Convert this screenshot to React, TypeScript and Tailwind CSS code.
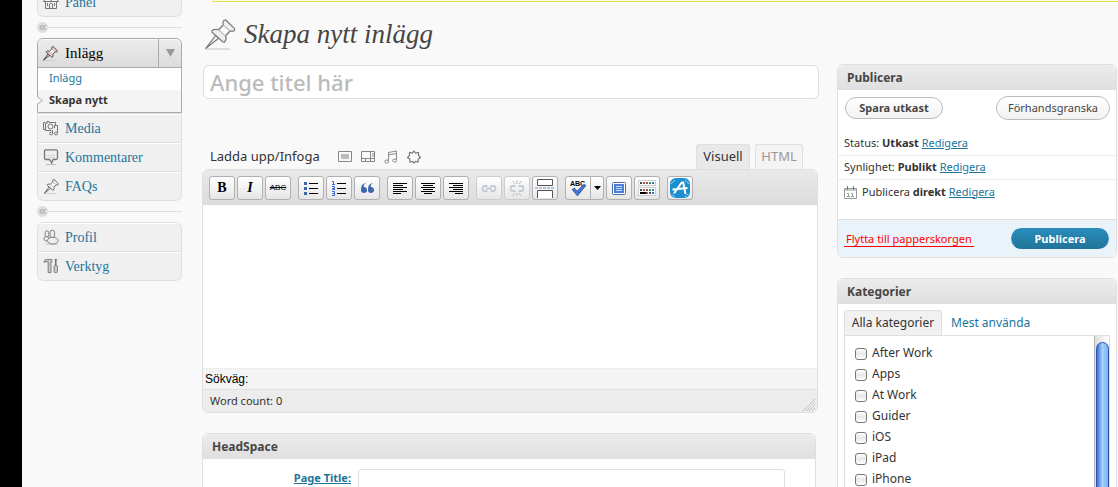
import type { ReactNode } from 'react'
import clsx from 'clsx'

type IconProps = { className?: string }

function PinIcon({ className, fill = '#efefef', stroke = '#777', width = 1.2 }: IconProps & { fill?: string; stroke?: string; width?: number }) {
  return (
    <svg viewBox="0 0 31 31" className={className} fill={fill} stroke={stroke} strokeWidth={width} strokeLinejoin="round" aria-hidden="true">
      <path d="M0 30H25" stroke="#ccc" />
      <path d="M11 16L.8 29.4 14 19z" />
      <path d="M20.500.8L29.600 9.600Q30 12 28 12.200L25 12 20.500 17Q22 20 19.500 23.200L18 23 7 13.300V11.600Q10 9.600 13.500 10.700L18.300 6Q17.500 3 18.500 1.800z" />
      <path d="M15 13L21 7M18 15L23 10" fill="none" stroke="#fff" strokeWidth="2.500" />
      <path d="M18.300 6L25 12M13.500 10.700L20.500 17" fill="none" stroke="#bbb" />
    </svg>
  )
}

function HomeIcon({ className }: IconProps) {
  return (
    <svg viewBox="0 0 16 16" className={className} fill="none" stroke="#777" aria-hidden="true">
      <path d="M2.500 8V14.500H13.500V8M.5 7.500L3 4H13L15.500 7.500zM6.500 14.500V10Q8 8 9.500 10V14.500M4.500 9V12M11.500 9V12M3.500 4V2.500H6V4M8 7.500V1" />
    </svg>
  )
}

function MediaIcon({ className }: IconProps) {
  return (
    <svg viewBox="0 0 16 16" className={className} fill="none" stroke="#777" aria-hidden="true">
      <path d="M8 10.500H2.500V3.500H4V1.500H6V2.500H12.500V6M2.500 9.500H.5V2.500H2.500" />
      <circle cx="7.500" cy="6.500" r="2.500" />
      <path d="M9.500 13V10M14.500 13V5.500H11.500V8" />
      <ellipse cx="8.200" cy="13.500" rx="1.600" ry="1.400" />
      <ellipse cx="13" cy="13.500" rx="1.600" ry="1.400" />
    </svg>
  )
}

function CommentIcon({ className }: IconProps) {
  return (
    <svg viewBox="0 0 16 16" className={className} fill="#eee" stroke="#777" aria-hidden="true">
      <path d="M3 15.500H13" stroke="#bbb" />
      <path d="M3 .8H13Q14.500.8 14.500 2.500V8.500Q14.500 10.500 13 10.500H10L8.800 14 6.500 10.500H3Q1.500 10.500 1.500 8.500V2.500Q1.500.8 3 .8z" strokeWidth="1.300" />
      <path d="M4 6.500H12M4 8.500H12" stroke="#d4d4d4" />
    </svg>
  )
}

function UsersIcon({ className }: IconProps) {
  return (
    <svg viewBox="0 0 18 18" className={className} fill="#eee" stroke="#777" aria-hidden="true">
      <path d="M3 16.500H17" stroke="#bbb" />
      <rect x="2.500" y="1.500" width="4" height="7" rx="2" />
      <ellipse cx="4" cy="10.500" rx="3" ry="2.500" />
      <rect x="8" y=".8" width="5" height="8.500" rx="2.500" />
      <ellipse cx="11" cy="12.500" rx="6" ry="3.800" />
    </svg>
  )
}

function ToolsIcon({ className }: IconProps) {
  return (
    <svg viewBox="0 0 17 17" className={className} fill="#ccc" stroke="#777" aria-hidden="true">
      <path d="M.8 4.500Q1.500 1.500 4.500 1.500H9.500V4H8.500V15.500H5.500V4H3.500z" />
      <path d="M13.500 1V8" strokeWidth="1.800" />
      <rect x="11.800" y="8" width="3.500" height="7.500" rx="1" />
      <path d="M12.500 1.500H15" />
    </svg>
  )
}

function Separator() {
  return (
    <div className="flex h-[21px] items-center">
      <span className="flex size-[11px] items-center justify-center rounded-full bg-[#dfdfdf]">
        <svg viewBox="0 0 7 7" className="size-[7px]" fill="none" stroke="#888" aria-hidden="true">
          <path d="M3.500 1L1 3.500 3.500 6M6.500 1L4 3.500 6.500 6" />
        </svg>
      </span>
      <span className="h-px flex-1 bg-[#dfdfdf]" />
    </div>
  )
}

function MenuItem({ icon, children, last }: { icon: ReactNode; children: ReactNode; last?: boolean }) {
  return (
    <a
      href="#"
      className={clsx(
        'flex h-[29px] shrink-0 items-center gap-1.5 border-b border-[#dfdfdf] bg-[#f0f0f0] pl-[5px] font-["Liberation_Serif",serif] text-[14px] text-[#21759b] shadow-[inset_0_1px_0_#fff]',
        last && 'rounded-b-md'
      )}
    >
      <span className="flex w-4 justify-center">{icon}</span>
      {children}
    </a>
  )
}

function Sidebar() {
  return (
    <nav className="w-[145px] shrink-0">
      <div className="flex h-[17px] flex-col justify-end overflow-hidden rounded-b-md border-x border-[#dfdfdf]">
        <MenuItem last icon={<HomeIcon className="size-4" />}>Panel</MenuItem>
      </div>
      <Separator />
      <div className="rounded-t-md border border-[#aaa] bg-white">
        <div className="flex h-[29px] rounded-t-md border-b border-[#aaa] bg-gradient-to-b from-[#ececec] to-[#dcdcdc] shadow-[inset_0_1px_0_#f8f8f8]">
          <a href="#" className="flex flex-1 items-center gap-1.5 pl-[5px] font-['Liberation_Serif',serif] text-[15px] text-black">
            <span className="w-4"><PinIcon className="size-[15px]" fill="#e8cccc" stroke="#4d4444" width={2} /></span>
            Inlägg
          </a>
          <button aria-label="Visa undermeny" className="flex w-[23px] items-center justify-center border-l border-[#aaa]">
            <svg viewBox="0 0 9 8" className="h-2 w-[9px]" fill="#999" aria-hidden="true"><path d="M0 0H9L4.500 8z" /></svg>
          </button>
        </div>
        <a href="#" className="block h-[22px] pl-[11px] text-[11px] leading-5 text-[#21759b]">Inlägg</a>
        <a href="#" className="relative block h-[22px] bg-[#f4f4f4] pl-[11px] text-[11px] leading-5 font-bold text-[#333]">
          <svg viewBox="0 0 6 9" className="absolute top-1.5 -left-px h-[9px] w-1.5" fill="#f9f9f9" stroke="#aaa" aria-hidden="true"><path d="M0 .5L5.500 4.500 0 8.500" /></svg>
          Skapa nytt
        </a>
      </div>
      <div className="overflow-hidden rounded-b-md border-x border-t border-[#dfdfdf]">
        <MenuItem icon={<MediaIcon className="size-4" />}>Media</MenuItem>
        <MenuItem icon={<CommentIcon className="size-4" />}>Kommentarer</MenuItem>
        <MenuItem last icon={<PinIcon className="size-[15px]" stroke="#666" width={2} />}>FAQs</MenuItem>
      </div>
      <Separator />
      <div className="overflow-hidden rounded-md border-x border-t border-[#dfdfdf]">
        <MenuItem icon={<UsersIcon className="size-[17px]" />}>Profil</MenuItem>
        <MenuItem last icon={<ToolsIcon className="size-4" />}>Verktyg</MenuItem>
      </div>
    </nav>
  )
}

function ToolButton({ label, children, dim, split }: { label: string; children: ReactNode; dim?: boolean; split?: boolean }) {
  return (
    <button
      aria-label={label}
      className={clsx(
        'flex h-6 w-[26px] items-center justify-center border bg-gradient-to-b from-white to-[#e6e6e6]',
        split ? 'rounded-l-[3px]' : 'rounded-[3px]',
        dim ? 'border-[#ccc]' : 'border-[#b0b0b0]'
      )}
    >
      {children}
    </button>
  )
}

const alignPaths = {
  left: 'M2 4.500H16M2 6.500H12M2 8.500H16M2 10.500H12M2 12.500H16M2 14.500H10',
  center: 'M2 4.500H16M4 6.500H14M2 8.500H16M4 10.500H14M2 12.500H16M5 14.500H13',
  right: 'M2 4.500H16M6 6.500H16M2 8.500H16M6 10.500H16M2 12.500H16M8 14.500H16',
}

function AlignIcon({ side }: { side: keyof typeof alignPaths }) {
  return (
    <svg viewBox="0 0 18 18" className="size-[18px]" stroke="#000" aria-hidden="true">
      <path d={alignPaths[side]} />
    </svg>
  )
}

function LinkIcon({ broken }: { broken?: boolean }) {
  return (
    <svg viewBox="0 0 18 18" className="size-[18px]" fill="none" stroke="#c3cbd8" aria-hidden="true">
      <path d="M7.500 7H4.500Q2.500 7 2.500 9.500T4.500 12H7.500M10.500 7H13.500Q15.500 7 15.500 9.500T13.500 12H10.500" strokeWidth="1.800" />
      {broken ? (
        <path d="M9 1V5M4.500 2L7 5M13.500 2L11 5M9 14V17M4.500 17L7 14M13.500 17L11 14" stroke="#bbb" />
      ) : (
        <path d="M6 9.500H12" strokeWidth="2" />
      )}
    </svg>
  )
}

function Toolbar() {
  return (
    <div className="flex h-[35px] items-center gap-[7px] bg-gradient-to-b from-[#e9e9e9] to-[#dcdcdc] px-1.5">
      <div className="flex gap-0.5">
        <ToolButton label="Fet"><span className="font-['Liberation_Serif',serif] text-[14px] leading-4 font-black">B</span></ToolButton>
        <ToolButton label="Kursiv"><span className="font-['Liberation_Serif',serif] text-[14px] leading-4 font-bold italic">I</span></ToolButton>
        <ToolButton label="Genomstruken"><span className="font-['Liberation_Sans',sans-serif] text-[8px] leading-3 line-through">ABC</span></ToolButton>
      </div>
      <div className="flex gap-0.5">
        <ToolButton label="Punktlista">
          <svg viewBox="0 0 18 18" className="size-[18px]" aria-hidden="true">
            <path d="M7 4.500H16M7 9.500H16M7 14.500H16" stroke="#000" />
            <path d="M2 3H5V6H2zM2 8H5V11H2zM2 13H5V16H2z" fill="#3b66ad" />
          </svg>
        </ToolButton>
        <ToolButton label="Numrerad lista">
          <svg viewBox="0 0 18 18" className="size-[18px]" aria-hidden="true">
            <path d="M7 4.500H16M7 9.500H16M7 14.500H16" stroke="#000" />
            <path d="M2 2.500H3.500V5.500M2 5.500H5M2 7.500H4.500V9.500H2.500V10.500H5M2 12.500H4.500V16.500H2M2.500 14.500H4.500" fill="none" stroke="#3b66cd" />
          </svg>
        </ToolButton>
        <ToolButton label="Citat">
          <svg viewBox="0 0 18 18" className="size-[18px]" fill="#3b66ad" aria-hidden="true">
            <path d="M8 4Q5.500 5 5.500 8A3 3 0 1 1 3 11Q2.500 5 8 4zM15 4Q12.500 5 12.500 8A3 3 0 1 1 10 11Q9.500 5 15 4z" />
          </svg>
        </ToolButton>
      </div>
      <div className="flex gap-0.5">
        <ToolButton label="Vänsterjustera"><AlignIcon side="left" /></ToolButton>
        <ToolButton label="Centrera"><AlignIcon side="center" /></ToolButton>
        <ToolButton label="Högerjustera"><AlignIcon side="right" /></ToolButton>
      </div>
      <div className="flex gap-0.5">
        <ToolButton label="Infoga länk" dim><LinkIcon /></ToolButton>
        <ToolButton label="Ta bort länk" dim><LinkIcon broken /></ToolButton>
        <ToolButton label="Infoga Mer-tagg">
          <svg viewBox="0 0 22 20" className="h-5 w-[22px]" fill="#fff" stroke="#555" aria-hidden="true">
            <path d="M3.500 1.500H18.500V7.500H3.500z" />
            <path d="M3.500 20V12.500H18.500V20" />
            <path d="M1 10H21" stroke="#6a9ccb" strokeDasharray="3 1" />
          </svg>
        </ToolButton>
      </div>
      <div className="flex gap-0.5">
        <div className="flex">
          <ToolButton label="Stavningskontroll" split>
            <svg viewBox="0 0 18 18" className="size-[18px]" aria-hidden="true">
              <text x="1" y="7" fontSize="7" fontWeight="bold" fontFamily="Liberation Sans, sans-serif">ABC</text>
              <path d="M3 10.500L5.500 9 8 12 14.500 5.500 17 6.500 8.500 17z" fill="#4a74cc" stroke="#27479a" strokeWidth=".6" />
            </svg>
          </ToolButton>
          <button aria-label="Välj språk" className="flex h-6 w-[13px] items-center justify-center rounded-r-[3px] border border-l-0 border-[#b0b0b0] bg-gradient-to-b from-white to-[#e6e6e6]">
            <svg viewBox="0 0 7 4" className="h-1 w-[7px]" aria-hidden="true"><path d="M0 0H7L3.500 4z" /></svg>
          </button>
        </div>
        <ToolButton label="Helskärm">
          <svg viewBox="0 0 18 18" className="size-[18px]" aria-hidden="true">
            <rect x="2.500" y="3.500" width="13" height="12" rx="1" fill="#fff" stroke="#4d6ea8" />
            <rect x="4" y="5" width="10" height="9" fill="#4a80dd" />
            <path d="M6 7.500H12M6 9.500H12M6 11.500H12" stroke="#c8dcff" />
          </svg>
        </ToolButton>
        <ToolButton label="Visa fler knappar">
          <svg viewBox="0 0 20 18" className="h-[18px] w-5" aria-hidden="true">
            <path d="M1.500 1.500H18.500V6.500H1.500zM1.500 8.500H18.500V16.500H1.500z" fill="#fff" stroke="#ccc" />
            <path d="M3 4H5M3 11H5M12 14H14" stroke="#444" strokeWidth="2" />
            <path d="M6 4H8M6 11H8M9 14H11" stroke="#955" strokeWidth="2" />
            <path d="M9 4H11M9 11H11" stroke="#a52" strokeWidth="2" />
            <path d="M12 4H14M12 11H14" stroke="#295" strokeWidth="2" />
            <path d="M15 4H17M15 11H17M15 14H17" stroke="#37c" strokeWidth="2" />
            <path d="M3 14H9" stroke="#000" strokeWidth="2" />
          </svg>
        </ToolButton>
      </div>
      <ToolButton label="App Store">
        <svg viewBox="0 0 22 22" className="size-[22px]" aria-hidden="true">
          <rect x="1" y="1" width="20" height="20" rx="6" fill="#1d8fd0" />
          <path d="M6 3L2 7M16 3L20 7M3 18L6 20M19 17L16 20" stroke="#8fd0f5" />
          <path d="M5 16.500L13 5M14 4.500L16.500 17M3.500 12.500L18.500 11" stroke="#fff" strokeWidth="2" />
        </svg>
      </ToolButton>
    </div>
  )
}

function UploadIcons() {
  return (
    <div className="flex items-center gap-[9px]">
      <svg viewBox="0 0 14 13" className="h-[13px] w-3.5" fill="none" stroke="#888" aria-label="Bild">
        <path d="M.5 1.500H13.500V11.500H.5z" />
        <path d="M3 4H11V9H3z" fill="#bbb" stroke="none" />
      </svg>
      <svg viewBox="0 0 14 13" className="h-[13px] w-3.5" fill="none" stroke="#888" aria-label="Video">
        <path d="M.5 1.500H13.500V11.500H.5zM.5 8.500H13.500M9.500 1.500V8.500M4.500 8.500V11.500M9.500 8.500V11.500M12 3V7" />
      </svg>
      <svg viewBox="0 0 14 14" className="size-3.5" fill="none" stroke="#888" aria-label="Ljud">
        <path d="M4.500 11V2.500L12.500 1V10M4.500 5L12.500 3.500" />
        <ellipse cx="2.700" cy="11.500" rx="2" ry="1.500" />
        <ellipse cx="10.700" cy="10.500" rx="2" ry="1.500" />
      </svg>
      <svg viewBox="0 0 14 14" className="size-3.5" fill="none" stroke="#777" strokeWidth="1.200" aria-label="Media">
        <path d="M7 1L8.500 3 11.500 2.500 11.500 5.500 13.500 7.500 11.200 9 11 12 8.500 11.500 7 13 5.500 11.500 3 12 2.800 9 .5 7.500 2.500 5.500 2.500 2.500 5.500 3z" />
      </svg>
    </div>
  )
}

function Panel({ title, children }: { title: string; children: ReactNode }) {
  return (
    <section className="rounded-md border border-[#dfdfdf] bg-white">
      <h3 className="h-[25px] rounded-t-md bg-gradient-to-b from-[#ececec] to-[#dfdfdf] pl-[9px] text-[12px] leading-[26px] font-bold text-[#464646]">{title}</h3>
      {children}
    </section>
  )
}

function Editor() {
  return (
    <main className="min-w-0 flex-1">
      <h2 className="mt-4 flex h-8 items-center gap-2 pl-[3px] font-['Liberation_Serif',serif] text-[27px] text-[#464646] italic">
        <PinIcon className="size-[31px]" />
        Skapa nytt inlägg
      </h2>
      <div className="-mr-px ml-px pt-[15px]">
        <input
          aria-label="Ange titel här"
          placeholder="Ange titel här"
          className="block h-[34px] w-full rounded-md border border-[#dfdfdf] bg-white px-1.5 text-[22px] leading-7 font-medium placeholder:text-[#bbb]"
        />
      </div>
      <div className="mt-[45px] flex h-[25px] items-center gap-[18px] pl-2 text-[13px] text-[#333]">
        Ladda upp/Infoga
        <UploadIcons />
        <div className="mr-[15px] ml-auto flex gap-[5px] self-stretch">
          <button className="w-[54px] rounded-t-[3px] border border-b-0 border-[#dfdfdf] bg-[#e9e9e9] text-[#333]">Visuell</button>
          <button className="w-12 rounded-t-[3px] border border-b-0 border-[#dfdfdf] bg-[#f4f4f4] text-[#999]">HTML</button>
        </div>
      </div>
      <div className="overflow-hidden rounded-md border border-[#dfdfdf] bg-white">
        <Toolbar />
        <textarea aria-label="Innehåll" className="block h-[163px] w-full resize-none bg-white" />
        <div className="h-[21px] border-t border-[#eee] bg-[#f4f4f4] pl-0.5 font-['Liberation_Sans',sans-serif] text-[12px] leading-5 text-black">Sökväg:</div>
        <div className="flex h-[23px] items-center justify-between border-t border-[#dfdfdf] bg-[#ececec] pr-0.5 pl-[7px] text-[11px] text-[#333]">
          Word count: 0
          <svg viewBox="0 0 12 12" className="mt-2 size-3" stroke="#aaa" aria-hidden="true">
            <path d="M0 12L12 0M3 12L12 3M6 12L12 6M9 12L12 9" strokeDasharray="1 .6" />
          </svg>
        </div>
      </div>
      <div className="mt-5 mr-0.5">
        <Panel title="HeadSpace">
          <div className="flex gap-[7px] pt-2.5 pr-[30px] pb-4">
            <label htmlFor="page-title" className="w-[148px] text-right text-[11px] leading-[18px] font-bold text-[#21759b] underline">Page Title:</label>
            <input id="page-title" className="h-6 min-w-0 flex-1 rounded-[3px] border border-[#dfdfdf] bg-white px-1 text-[12px]" />
          </div>
        </Panel>
      </div>
    </main>
  )
}

function StatusRow({ label, value, icon, last }: { label: string; value: string; icon?: ReactNode; last?: boolean }) {
  return (
    <div className={clsx('flex h-6 items-center gap-[5px] px-1.5 text-[11px] text-[#333]', !last && 'border-b border-[#eee]')}>
      {icon}
      <span>{label} <b>{value}</b> <a href="#" className="text-[#21759b] underline">Redigera</a></span>
    </div>
  )
}

const categories = ['After Work', 'Apps', 'At Work', 'Guider', 'iOS', 'iPad', 'iPhone']

function SideColumn() {
  return (
    <aside className="mt-[62px] flex w-[280px] shrink-0 flex-col gap-5">
      <Panel title="Publicera">
        <div className="flex items-center justify-between pt-1.5 pr-1.5 pb-3 pl-[7px]">
          <button className="h-[22px] w-[98px] rounded-full border border-[#bbb] bg-gradient-to-b from-white to-[#f2f2f2] text-[11px] font-bold text-[#464646]">Spara utkast</button>
          <button className="h-6 w-[114px] rounded-full border border-[#bbb] bg-gradient-to-b from-white to-[#f2f2f2] text-[11px] text-[#464646]">Förhandsgranska</button>
        </div>
        <StatusRow label="Status:" value="Utkast" />
        <StatusRow label="Synlighet:" value="Publikt" />
        <StatusRow
          last
          label="Publicera"
          value="direkt"
          icon={
            <svg viewBox="0 0 13 13" className="size-[13px]" fill="none" stroke="#999" aria-hidden="true">
              <path d="M.5 2.500H12.500V12.500H.5z" />
              <path d="M1 4H12" stroke="#ccc" strokeWidth="2" />
              <path d="M3.500 0V4M9.500 0V4" stroke="#777" />
              <path d="M3 7.500H4.500V10.500M3 10.500H6M7 7.500H8.500V10.500M7 10.500H10" />
            </svg>
          }
        />
        <div className="mt-[15px] flex h-[38px] items-center justify-between rounded-b-md border-t border-[#dfdfdf] bg-[#eaf2fa] pr-[7px] pl-1.5">
          <a href="#" className="border-b border-[red] px-0.5 text-[11px] leading-[15px] text-[red]">Flytta till papperskorgen</a>
          <button className="h-[21px] w-[98px] rounded-full border border-[#298cba] border-b-[#21759b] bg-gradient-to-b from-[#298cba] to-[#21759b] text-[11px] leading-4 font-bold text-white">Publicera</button>
        </div>
      </Panel>
      <Panel title="Kategorier">
        <div className="px-1.5 pt-1.5">
          <div className="flex text-[12px] leading-6">
            <button className="w-[98px] rounded-t-[3px] border border-b-0 border-[#dfdfdf] bg-[#f1f1f1] text-[#333]">Alla kategorier</button>
            <button className="px-[9px] pt-px text-[#21759b]">Mest använda</button>
          </div>
          <div className="flex h-[200px] justify-between border border-[#dfdfdf] pl-2.5">
            <ul className="pt-1.5 text-[12px] text-[#333]">
              {categories.map((name) => (
                <li key={name}>
                  <label className="flex h-[21px] items-center gap-[5px]">
                    <input type="checkbox" className="mt-0.5 size-3 appearance-none rounded-[3px] border border-[#777] bg-gradient-to-b from-white via-[#e8e8e8] to-white" />
                    {name}
                  </label>
                </li>
              ))}
            </ul>
            <div className="w-[15px] border-l border-[#bbb] bg-gradient-to-r from-[#ddd] to-white pt-1.5">
              <div className="ml-px h-full rounded-full border border-[#2a50b0] bg-gradient-to-r from-[#3c70d8] via-[#a8d0f8] to-[#6fb4f4]" />
            </div>
          </div>
        </div>
      </Panel>
    </aside>
  )
}

export default function App() {
  return (
    <div className="flex h-screen overflow-hidden bg-[#f9f9f9] font-['Noto_Sans',sans-serif]">
      <div className="w-[22px] shrink-0 bg-black" />
      <div className="flex min-w-0 flex-1 gap-5 pl-[15px]">
        <Sidebar />
        <div className="min-w-0 flex-1">
          <div className="ml-2.5 h-0.5 rounded-bl-sm border-b border-l border-[#e6db55] bg-[#ffffe0]" />
          <div className="flex gap-[19px] pr-px">
            <Editor />
            <SideColumn />
          </div>
        </div>
      </div>
    </div>
  )
}
